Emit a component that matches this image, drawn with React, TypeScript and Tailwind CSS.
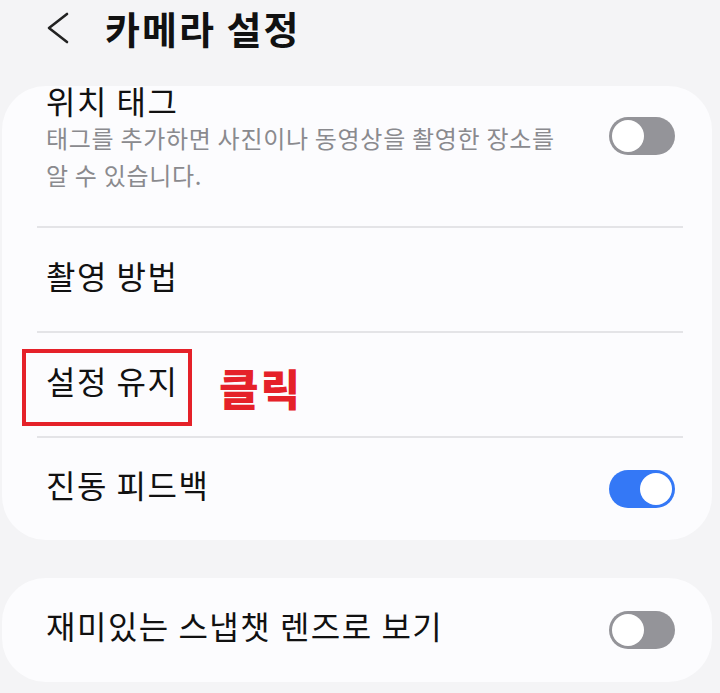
import React from "react";

const font = { fontFamily: '"Noto Sans CJK KR", "Noto Sans", sans-serif' };

function Toggle({ on }: { on: boolean }) {
  return (
    <div
      className={`relative w-[66px] h-[38px] rounded-full shrink-0 ${
        on ? "bg-[#3478f6]" : "bg-[#949499]"
      }`}
    >
      <div
        className={`absolute top-[3px] w-[32px] h-[32px] rounded-full bg-white ${
          on ? "right-[3px]" : "left-[3px]"
        }`}
      />
    </div>
  );
}

function Divider() {
  return <div className="h-[2px] ml-[35px] mr-[29px] bg-[#e4e4e7]" />;
}

function Label({ children }: { children: React.ReactNode }) {
  return (
    <span className="mb-[10px] text-[32px] leading-[38px] tracking-[1.5px] text-[#111]">
      {children}
    </span>
  );
}

function Row({ label, toggle, h = "h-[103px]" }: { label: string; toggle?: boolean; h?: string }) {
  return (
    <div className={`${h} flex items-center justify-between pl-[44px] pr-[37px]`}>
      <Label>{label}</Label>
      {toggle !== undefined && <Toggle on={toggle} />}
    </div>
  );
}

export default function App() {
  return (
    <div className="w-[720px] h-[693px] bg-[#f4f4f6] overflow-hidden" style={font}>
      {/* header */}
      <div className="h-[86px] flex items-start">
        <svg
          className="ml-[46px] mt-[12px]"
          width="24"
          height="32"
          viewBox="0 0 24 32"
          fill="none"
          stroke="#222"
          strokeWidth="2.6"
          strokeLinecap="round"
          strokeLinejoin="round"
        >
          <polyline points="21,2 3,16 21,30" />
        </svg>
        <h1 className="ml-[35px] text-[38px] leading-[56px] tracking-[2px] font-bold text-[#111]">
          카메라 설정
        </h1>
      </div>

      {/* main card */}
      <div className="ml-[2px] w-[710px] rounded-[44px] bg-[#fcfcfe]">
        <div className="h-[140px] flex items-start justify-between pl-[44px] pr-[37px]">
          <div className="-mt-[5px]">
            <div className="text-[32px] leading-[38px] tracking-[1.5px] text-[#111]">위치 태그</div>
            <div className="w-[520px] text-[24px] leading-[37px] tracking-[0.7px] text-[#8a8a8e]">
              태그를 추가하면 사진이나 동영상을 촬영한 장소를 알 수 있습니다.
            </div>
          </div>
          <div className="mt-[31px]">
            <Toggle on={false} />
          </div>
        </div>
        <Divider />
        <Row label="촬영 방법" />
        <Divider />
        <div className="relative">
          <Row label="설정 유지" />
          <div className="absolute left-[20px] top-[16px] w-[170px] h-[77px] border-[4px] border-[#e52129]" />
          <span className="absolute left-[217px] top-[29px] text-[43px] leading-[50px] tracking-[2px] font-black text-[#e52129]">
            클릭
          </span>
        </div>
        <Divider />
        <Row label="진동 피드백" toggle={true} h="h-[102px]" />
      </div>

      {/* second card */}
      <div className="mt-[38px] ml-[2px] w-[710px] h-[104px] rounded-[44px] bg-[#fcfcfe] flex items-center justify-between pl-[44px] pr-[37px]">
        <Label>재미있는 스냅챗 렌즈로 보기</Label>
        <Toggle on={false} />
      </div>
    </div>
  );
}
